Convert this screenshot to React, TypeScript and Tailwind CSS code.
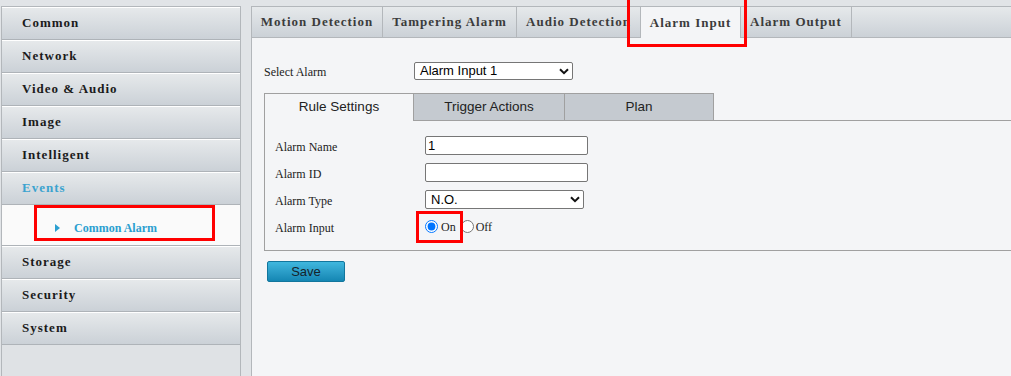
import React from 'react';

const serif = "font-['Liberation_Serif','Times_New_Roman',serif]";
const sans = "font-['Liberation_Sans',Arial,sans-serif]";

const menuItems = ['Common', 'Network', 'Video & Audio', 'Image', 'Intelligent', 'Events', 'Storage', 'Security', 'System'];

const topTabs = [
  { label: 'Motion Detection', w: 'w-[131px]' },
  { label: 'Tampering Alarm', w: 'w-[134px]' },
  { label: 'Audio Detection', w: 'w-[124px]' },
  { label: 'Alarm Input', w: 'w-[100px]', active: true },
  { label: 'Alarm Output', w: 'w-[111px]' }
];

const Chevron = () => (
  <svg width="10" height="7" viewBox="0 0 10 7" className="shrink-0">
    <path d="M1 1.2 L5 5.2 L9 1.2" fill="none" stroke="#111" strokeWidth="2" />
  </svg>
);

const Sidebar = () => (
  <div className="ml-[1px] mt-[6px] w-[240px] shrink-0 border-l border-r border-t border-[#b3b7bb] bg-[#dfe2e5] flex flex-col">
    {menuItems.map(item => (
      <React.Fragment key={item}>
        <div
          className={`h-[33px] border-t border-white border-b border-b-[#aeb3b8] bg-linear-to-b from-[#e6e9eb] to-[#cbd1d7] flex items-center pl-[20px] pb-[1px] ${serif} font-bold text-[13px] tracking-[1px] ${item === 'Events' ? 'text-[#3ba3cf]' : 'text-[#1b1b1b]'}`}
        >
          {item}
        </div>
        {item === 'Events' && (
          <div className="h-[41px] bg-[#fafafa] border-b border-[#aeb3b8] flex items-center pl-[53px] pt-[5px]">
            <svg width="5" height="8" viewBox="0 0 5 8" className="mr-[14px]">
              <path d="M0 0 L5 4 L0 8 Z" fill="#2b9fd0" />
            </svg>
            <span className={`${serif} font-bold text-[12px] text-[#2b9fd0]`}>Common Alarm</span>
          </div>
        )}
      </React.Fragment>
    ))}
  </div>
);

const FieldRow = ({ label, children }: { label: string; children: React.ReactNode }) => (
  <div className="h-[27px] flex items-center">
    <div className={`w-[150px] ${serif} text-[12px] text-[#222] pt-[2px]`}>{label}</div>
    {children}
  </div>
);

export default function App() {
  return (
    <div className="relative w-[1011px] h-[376px] overflow-hidden bg-[#e1e4e7] flex">
      <Sidebar />

      <div className="ml-[10px] mt-[6px] flex-1 border-l border-t border-[#b3b7bb] bg-[#f4f5f7] flex flex-col">
        {/* Top tabs */}
        <div className="flex h-[31px] shrink-0">
          {topTabs.map(tab => (
            <div
              key={tab.label}
              className={`${tab.w} h-full border-r border-[#b3b7bb] flex items-center justify-center overflow-hidden whitespace-nowrap ${serif} font-bold text-[13px] tracking-[1px] text-[#3c3c3c] ${tab.active ? 'bg-[#f4f5f7]' : 'border-b bg-linear-to-b from-[#e6e9eb] to-[#cbd1d7]'}`}
            >
              {tab.label}
            </div>
          ))}
          <div className="flex-1 h-full border-b border-[#b3b7bb] bg-linear-to-b from-[#e6e9eb] to-[#cbd1d7]" />
        </div>

        <div className="pl-[12px] pt-[24px]">
          {/* Select Alarm */}
          <div className="flex items-center h-[18px]">
            <div className={`w-[150px] ${serif} text-[12px] text-[#222] pt-[2px]`}>Select Alarm</div>
            <div className={`w-[159px] h-[18px] bg-white border border-[#767676] rounded-[2px] flex items-center justify-between pl-[5px] pr-[3px] ${sans} text-[13px] text-black`}>
              <span>Alarm Input 1</span>
              <Chevron />
            </div>
          </div>

          {/* Inner tabs */}
          <div className="mt-[13px] flex h-[28px]">
            <div className={`w-[149px] border-l border-t border-[#a0a0a0] bg-[#f4f5f7] flex items-center justify-center ${sans} text-[13.5px] text-[#222]`}>
              Rule Settings
            </div>
            <div className={`w-[151px] border-l border-t border-b border-[#a0a0a0] bg-[#c5cad0] flex items-center justify-center ${sans} text-[13.5px] text-[#222]`}>
              Trigger Actions
            </div>
            <div className={`w-[150px] border-l border-r border-t border-b border-[#a0a0a0] bg-[#c5cad0] flex items-center justify-center ${sans} text-[13.5px] text-[#222]`}>
              Plan
            </div>
            <div className="flex-1 border-b border-[#a0a0a0]" />
          </div>

          {/* Form box */}
          <div className="border-l border-b border-[#a0a0a0] pl-[10px] pt-[11px] pb-[10px]">
            <FieldRow label="Alarm Name">
              <div className={`w-[163px] h-[19px] bg-white border border-[#767676] rounded-[2px] flex items-center pl-[2px] ${sans} text-[13px] text-black`}>1</div>
            </FieldRow>
            <FieldRow label="Alarm ID">
              <div className="w-[163px] h-[19px] bg-white border border-[#767676] rounded-[2px]" />
            </FieldRow>
            <FieldRow label="Alarm Type">
              <div className={`w-[159px] h-[19px] bg-white border border-[#767676] rounded-[2px] flex items-center justify-between pl-[5px] pr-[3px] ${sans} text-[13px] text-black`}>
                <span>N.O.</span>
                <Chevron />
              </div>
            </FieldRow>
            <FieldRow label="Alarm Input">
              <div className={`flex items-center ${serif} text-[12px] text-[#222]`}>
                <input type="radio" name="alarmInput" defaultChecked className="m-0 w-[13px] h-[13px]" />
                <span className="ml-[3px] pt-[1px]">On</span>
                <input type="radio" name="alarmInput" className="m-0 ml-[5px] w-[13px] h-[13px]" />
                <span className="ml-[2px] pt-[1px]">Off</span>
              </div>
            </FieldRow>
          </div>

          <button className={`mt-[10px] ml-[3px] w-[78px] h-[21px] rounded-[2px] border border-[#12769d] bg-linear-to-b from-[#3fb7de] to-[#1486b3] ${sans} text-[13px] text-[#16232b]`}>
            Save
          </button>
        </div>
      </div>

      {/* Annotation boxes */}
      <div className="absolute left-[627px] top-[-5px] w-[120px] h-[52px] border-[3px] border-[#ff0000]" />
      <div className="absolute left-[34px] top-[205px] w-[181px] h-[36px] border-[3px] border-[#ff0000]" />
      <div className="absolute left-[416px] top-[211px] w-[47px] h-[32px] border-[3px] border-[#ff0000]" />
    </div>
  );
}
